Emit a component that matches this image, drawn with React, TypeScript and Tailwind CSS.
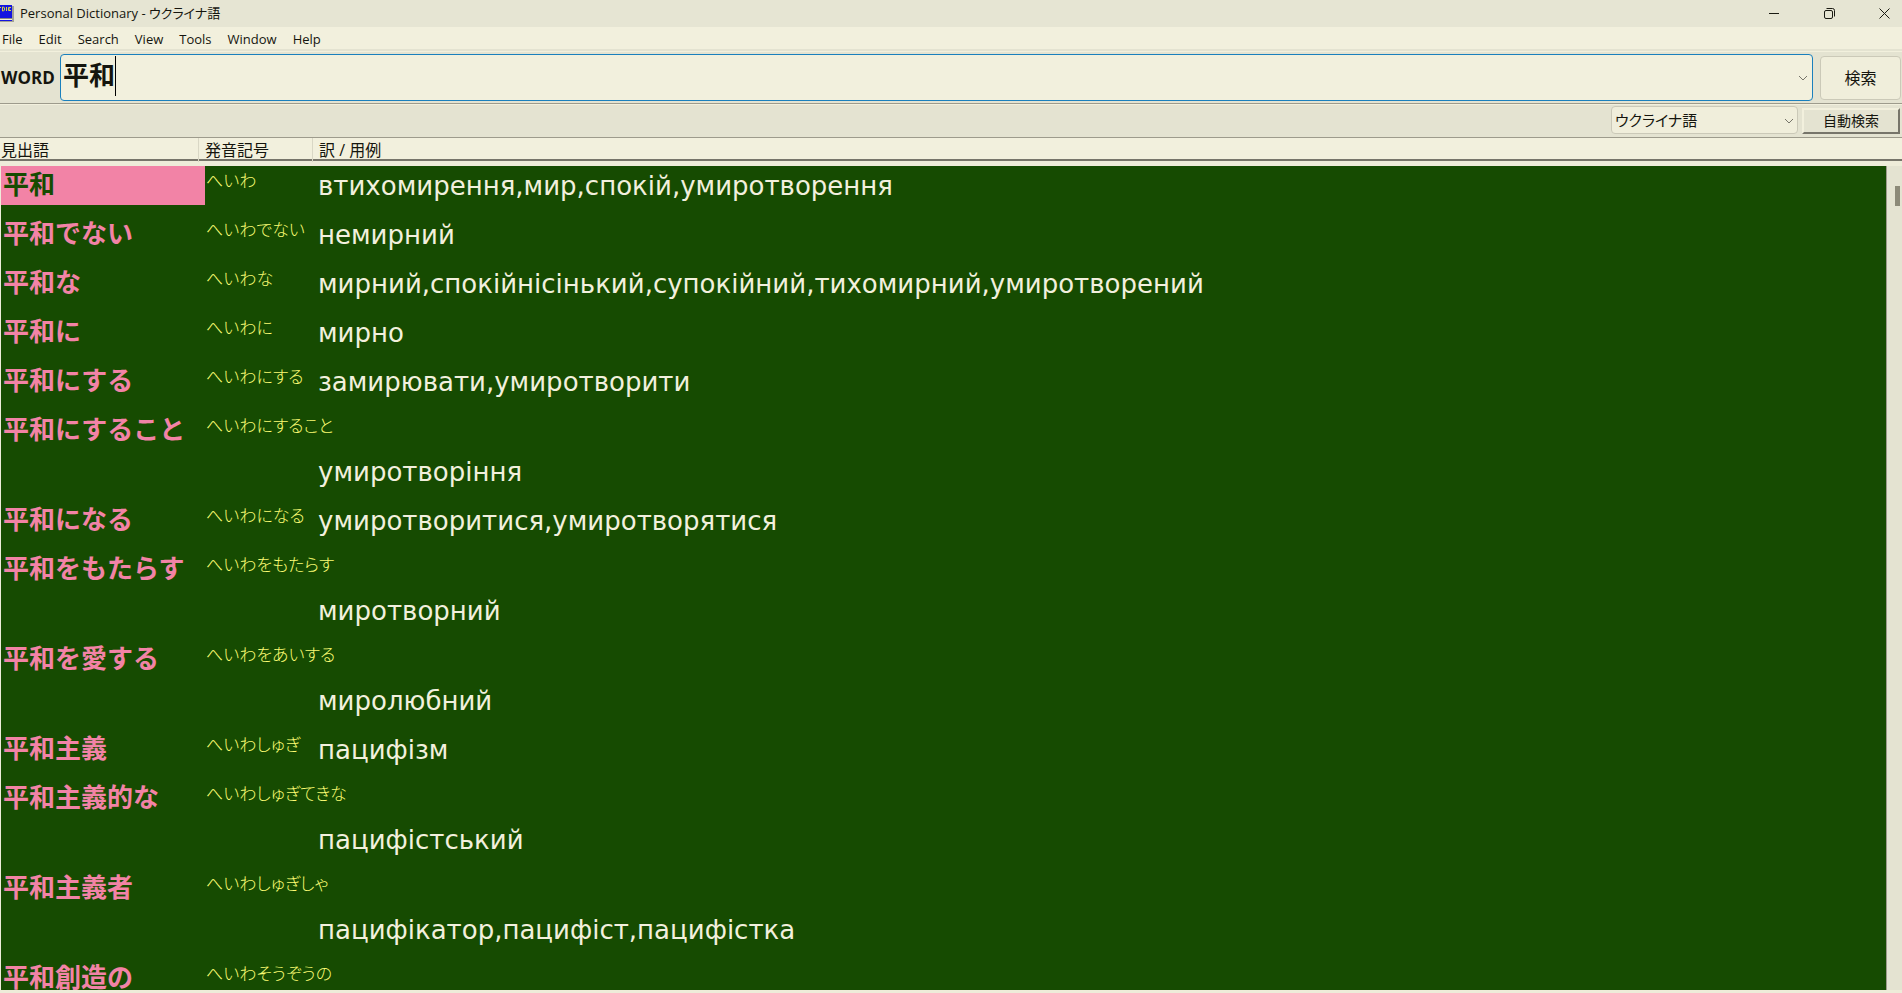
import React, { useState } from "react";
import clsx from "clsx";

const menus = ["File", "Edit", "Search", "View", "Tools", "Window", "Help"];

// wrap: the reading is too long for its column, so the translation drops a line
const entries = [
  { word: "平和", reading: "へいわ", text: "втихомирення,мир,спокій,умиротворення" },
  { word: "平和でない", reading: "へいわでない", text: "немирний" },
  { word: "平和な", reading: "へいわな", text: "мирний,спокійнісінький,супокійний,тихомирний,умиротворений" },
  { word: "平和に", reading: "へいわに", text: "мирно" },
  { word: "平和にする", reading: "へいわにする", text: "замирювати,умиротворити" },
  { word: "平和にすること", reading: "へいわにすること", text: "умиротворіння", wrap: true },
  { word: "平和になる", reading: "へいわになる", text: "умиротворитися,умиротворятися" },
  { word: "平和をもたらす", reading: "へいわをもたらす", text: "миротворний", wrap: true },
  { word: "平和を愛する", reading: "へいわをあいする", text: "миролюбний", wrap: true },
  { word: "平和主義", reading: "へいわしゅぎ", text: "пацифізм" },
  { word: "平和主義的な", reading: "へいわしゅぎてきな", text: "пацифістський", wrap: true },
  { word: "平和主義者", reading: "へいわしゅぎしゃ", text: "пацифікатор,пацифіст,пацифістка", wrap: true },
  { word: "平和創造の", reading: "へいわそうぞうの", text: "", wrap: true },
];

function Chevron({ className }: { className?: string }) {
  return (
    <svg className={clsx("pointer-events-none absolute", className)} width="10" height="6" viewBox="0 0 10 6" fill="none" stroke="#77756a">
      <path d="M1 1l4 4 4-4" />
    </svg>
  );
}

function TitleBar() {
  return (
    <header className="flex h-[27px] shrink-0 items-center bg-[#e6e5d3]">
      <svg width="14" height="18" viewBox="0 0 14 18" className="shrink-0">
        <path d="M0 0h12v13H0z" fill="#1414e0" />
        <path d="M12 1h2v16H0v-1h12z" fill="#a3a296" />
        <path d="M0 13h12v1H0z" fill="#8a8a80" />
        <path d="M0 14h12v1H0z" fill="#f0eedb" />
        <path d="M0 15h12v1H0z" fill="#1414e0" />
        <path d="M0 2.500h1M2.500 2v4h1l1-1V3l-1-1zM6.500 2v4M11 2.500H8.500v3H11M8.500 4H10" fill="none" stroke="#d8d840" />
      </svg>
      <h1 className="ml-1.5 flex-1 text-[13px]">Personal Dictionary - ウクライナ語</h1>
      <div className="flex h-full gap-5">
        <button aria-label="Minimize" className="flex w-[35px] items-center justify-center">
          <svg width="11" height="11" stroke="#1a1a12" fill="none"><path d="M0 5.500h10" /></svg>
        </button>
        <button aria-label="Restore" className="flex w-[35px] items-center justify-center">
          <svg width="11" height="11" stroke="#1a1a12" fill="none">
            <rect x=".5" y="2.500" width="8" height="8" rx="1.500" />
            <path d="M2.500.5h6a2 2 0 0 1 2 2v6" />
          </svg>
        </button>
        <button aria-label="Close" className="flex w-[35px] items-center justify-center">
          <svg width="11" height="11" stroke="#1a1a12" fill="none"><path d="M.5.5l10 10M10.500.5l-10 10" /></svg>
        </button>
      </div>
    </header>
  );
}

function SearchBar() {
  const [word, setWord] = useState("平和");

  return (
    <div className="flex h-[51px] shrink-0 items-center pl-px">
      <label htmlFor="word" className="w-[59px] text-[17px] font-bold">WORD</label>
      <div className="relative flex h-[47px] flex-1 items-start rounded-sm border border-[#1a80bd] bg-[#f2f0dd] pl-0.5">
        <input
          id="word"
          value={word}
          onChange={(e) => setWord(e.target.value)}
          className="mt-px h-10 w-[53px] border-r border-black pb-1 text-[26px] font-bold outline-none"
        />
        <Chevron className="right-1 top-5" />
      </div>
      <button className="ml-[7px] mr-px h-11 w-[81px] rounded border border-[#cbc9b8] bg-[#f0eedb] text-base">検索</button>
    </div>
  );
}

function LanguageBar() {
  return (
    <div className="flex h-8 shrink-0 items-start justify-end gap-1 pr-0.5 pt-px">
      <div className="relative">
        <select aria-label="辞書" className="h-7 w-[187px] appearance-none rounded-sm border border-[#cbc9b8] bg-[#f0eedb] pl-[3px] text-[15px]">
          <option>ウクライナ語</option>
        </select>
        <Chevron className="right-1 top-3" />
      </div>
      <button className="mt-0.5 h-[26px] w-[98px] border-2 border-b-[#77756a] border-l-[#f2f0dd] border-r-[#77756a] border-t-[#f2f0dd] text-sm">自動検索</button>
    </div>
  );
}

export default function App() {
  const [selected, setSelected] = useState(0);

  return (
    <div className="flex h-screen flex-col overflow-hidden bg-[#e4e3d1] font-['Open_Sans','Noto_Sans_CJK_JP',sans-serif] text-[#15150e] [font-feature-settings:'palt']">
      <TitleBar />
      <nav className="flex h-[23px] shrink-0 items-center gap-4 border-b border-[#e4e3d1] bg-[#f2f0dd] pl-0.5 pt-[3px] text-[13px]">
        {menus.map((menu) => (
          <button key={menu}>{menu}</button>
        ))}
      </nav>
      <div className="h-0.5 shrink-0 border-b border-[#f2f0dd]" />
      <SearchBar />
      <div className="h-0.5 shrink-0 border-b border-[#f2f0dd] bg-[#9d9b8c]" />
      <LanguageBar />

      <main className="flex min-h-0 flex-1 flex-col border-t border-[#9d9b8c] bg-[#eeecd9]">
        <div className="grid h-[23px] shrink-0 grid-cols-[198px_114px_1fr] items-center border-b-2 border-[#77756a] bg-[#f2f0dd] text-base">
          <span className="pl-px">見出語</span>
          <span className="border-l border-[#d9d7c5] pl-1.5">発音記号</span>
          <span className="border-l border-[#d9d7c5] pl-1.5">訳 / 用例</span>
        </div>
        <div className="mb-[3px] ml-px mt-[5px] flex min-h-0 flex-1">
          <div className="min-w-0 flex-1 overflow-hidden border-r border-[#9d9b8c] bg-[#164b01]">
            {entries.map((entry, i) => (
              <div
                key={entry.word}
                onClick={() => setSelected(i)}
                className={clsx("grid grid-cols-[204px_113px_1fr] items-start whitespace-nowrap", entry.wrap ? "h-[90px]" : "h-[49px]")}
              >
                <span
                  className={clsx(
                    "h-[39px] pl-0.5 text-[26px] leading-9 font-bold [font-feature-settings:normal]",
                    i === selected ? "bg-[#f283a6] text-[#164b01]" : "text-[#f283a6]"
                  )}
                >
                  {entry.word}
                </span>
                <span className="pl-px font-['Noto_Sans_CJK_JP',sans-serif] text-[17px] font-light leading-7 text-[#fbfc74]">{entry.reading}</span>
                <span className={clsx("font-['DejaVu_Sans',sans-serif] text-[26px] leading-10 text-[#f2f0dd]", entry.wrap && "pt-[41px]")}>
                  {entry.text}
                </span>
              </div>
            ))}
          </div>
          <div className="flex w-[15px] shrink-0 justify-end bg-[#e4e3d1] pr-0.5">
            <div className="mt-5 h-5 w-[5px] bg-[#8c8a78]" />
          </div>
        </div>
      </main>
    </div>
  );
}
